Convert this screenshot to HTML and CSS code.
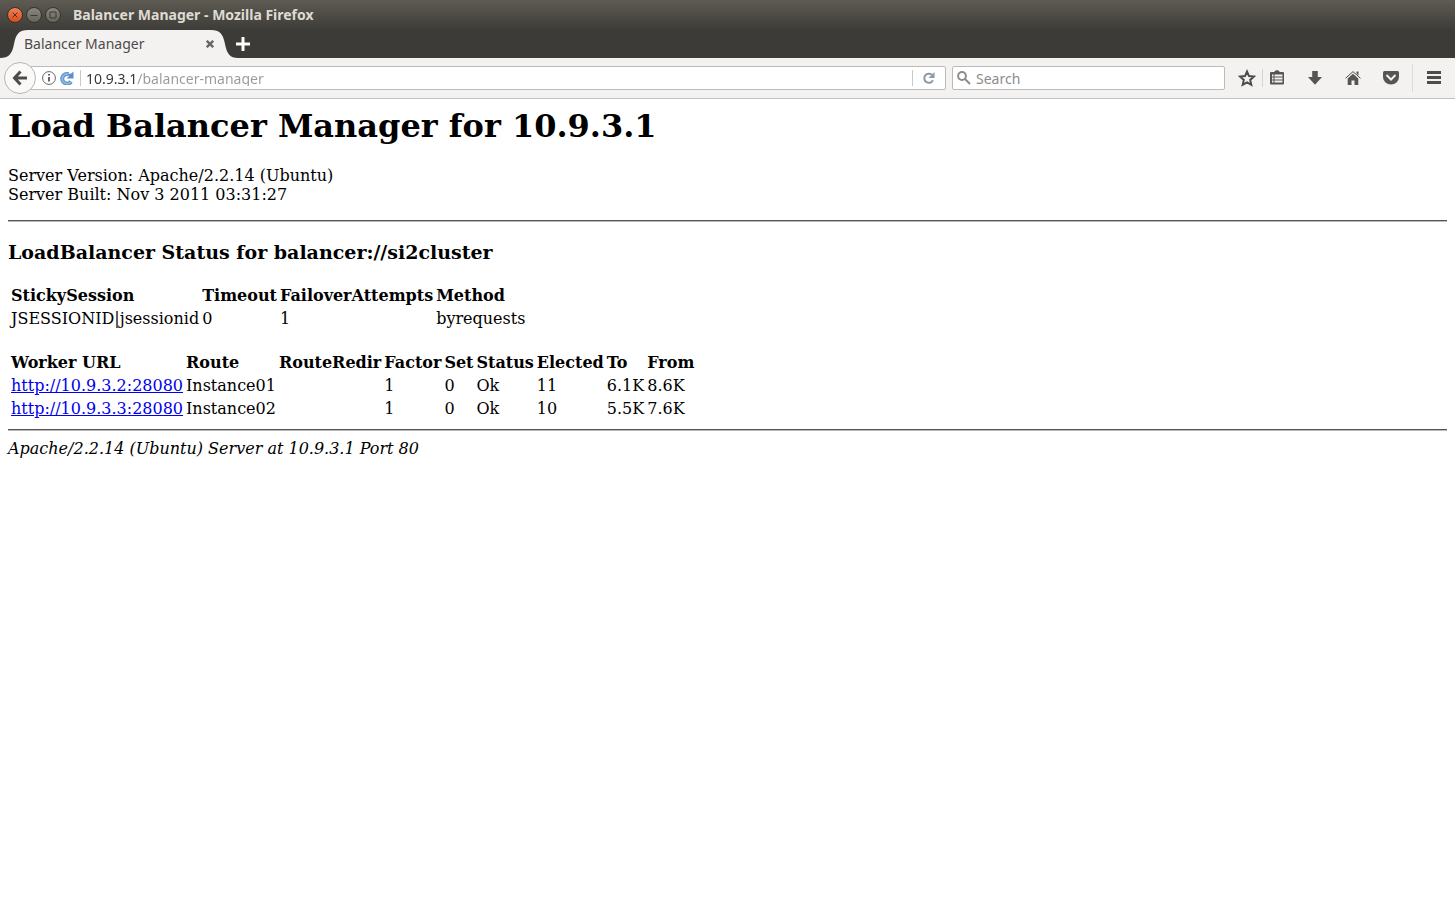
FILE: index.html
```html
<!DOCTYPE html>
<html lang="en">
<head>
<meta charset="utf-8">
<title>Balancer Manager</title>
<link rel="stylesheet" href="styles.css">
</head>
<body>
<header class="browser">
  <div class="titlebar">
    <div class="window-buttons">
      <button class="window-button window-close" type="button" aria-label="Close window"><svg viewBox="0 0 16 16"><path d="M5.500 5.500l5 5M10.500 5.500l-5 5"/></svg></button>
      <button class="window-button" type="button" aria-label="Minimize"><svg viewBox="0 0 16 16"><path d="M4.500 8.500h7"/></svg></button>
      <button class="window-button" type="button" aria-label="Maximize"><svg viewBox="0 0 16 16"><path d="M5 5h6v6H5z"/></svg></button>
    </div>
    <span class="window-title">Balancer Manager - Mozilla Firefox</span>
  </div>
  <div class="tabstrip">
    <div class="tab">
      <svg class="tab-shape" viewBox="0 0 238 28" aria-hidden="true"><path d="M0 28C9 28 12 24 14 14C16 4 19 0 28 0H211C220 0 223 4 225 14C227 24 230 28 238 28Z"/></svg>
      <span class="tab-label">Balancer Manager</span>
      <button class="tab-close" type="button" aria-label="Close tab"><svg viewBox="0 0 10 10"><path d="M1 1l8 8M9 1L1 9"/></svg></button>
    </div>
    <button class="new-tab" type="button" aria-label="New tab"><svg viewBox="0 0 14 14"><path d="M7 0v14M0 7h14"/></svg></button>
  </div>
  <div class="toolbar">
    <button class="back" type="button" aria-label="Back"><svg viewBox="0 0 16 16"><path d="M8.500 1.500L2.500 8l6 6.500M3 8h12"/></svg></button>
    <div class="urlbar">
      <svg class="icon-info" viewBox="0 0 14 14" aria-hidden="true"><circle cx="7" cy="7" r="6.400"/><path class="stem" d="M7 6v4.500M7 3v1.600"/></svg>
      <svg class="icon-site" viewBox="0 0 14 14" aria-hidden="true"><path class="arc-edge" d="M11 10.500A4.800 4.800 0 1 1 8.500 3.200"/><path class="arc-core" d="M11 10.500A4.800 4.800 0 1 1 8.500 3.200"/><path class="arc-head" d="M13.500 .5V7.500H6.500L8.800 5.200 7.500 3 11.300 2.600z"/></svg>
      <input class="url" type="text" aria-label="Address" value="10.9.3.1/balancer-manager">
      <button class="reload" type="button" aria-label="Reload"><svg viewBox="0 0 14 14"><path class="arc" d="M11 9.300A4.600 4.600 0 1 1 9.800 3.700"/><path class="head" d="M12.500 1v6H6.500z"/></svg></button>
    </div>
    <div class="searchbar">
      <svg class="icon-search" viewBox="0 0 14 14" aria-hidden="true"><circle cx="5" cy="5" r="3.900"/><path d="M8 8l5 5"/></svg>
      <input class="search" type="text" aria-label="Search" placeholder="Search">
    </div>
    <nav class="tools">
      <button class="tool" type="button" aria-label="Bookmark this page"><svg viewBox="0 0 18 18"><path class="line" d="M9 2.500l2 4.600 4.900.5-3.700 3.300 1.100 4.900L9 13.300l-4.300 2.500 1.100-4.900L2.100 7.600l4.900-.5z"/></svg></button>
      <button class="tool tool-list" type="button" aria-label="Show bookmarks"><svg viewBox="0 0 18 18"><path fill-rule="evenodd" d="M6 3l2-1.800h2L12 3h3q1 0 1 1v10.500q0 1-1 1H3q-1 0-1-1V4q0-1 1-1zM4 5.500V7.500h1.500V5.500zM6.500 5.500V7.500h8V5.500zM4 8.500v2h1.500v-2zM6.500 8.500v2h8v-2zM4 11.500v2h1.500v-2zM6.500 11.500v2h8v-2z"/></svg></button>
      <button class="tool" type="button" aria-label="Downloads"><svg viewBox="0 0 18 18"><path d="M6.200 2h5.600v6H16l-7 7.800L2 8h4.200z"/></svg></button>
      <button class="tool" type="button" aria-label="Home"><svg viewBox="0 0 18 18"><path class="line roof" d="M1.500 9.300L9 2.600l7.500 6.700"/><path d="M12.500 2.500h2v4l-2-2zM9 4.800l5.300 4.700V16h-3.800v-4.500h-3V16H3.700V9.500z"/></svg></button>
      <button class="tool" type="button" aria-label="Save to Pocket"><svg viewBox="0 0 18 18"><path d="M2.500 2h13q1.500 0 1.500 1.500V8a8 7.500 0 0 1-16 0V3.500Q1 2 2.500 2z"/><path class="check" d="M4.500 6l4.500 4.500L13.500 6"/></svg></button>
      <button class="tool tool-menu" type="button" aria-label="Open menu"><svg viewBox="0 0 18 18"><path class="line bars" d="M2 3.500h14M2 8.500h14M2 13.500h14"/></svg></button>
    </nav>
  </div>
</header>
<main class="page">
  <h1>Load Balancer Manager for 10.9.3.1</h1>
  <p class="server">Server Version: Apache/2.2.14 (Ubuntu)<br>Server Built: Nov 3 2011 03:31:27</p>
  <hr>
  <h3>LoadBalancer Status for balancer://si2cluster</h3>
  <table class="balancer">
    <tr><th>StickySession</th><th>Timeout</th><th>FailoverAttempts</th><th>Method</th></tr>
    <tr><td>JSESSIONID|jsessionid</td><td>0</td><td>1</td><td>byrequests</td></tr>
  </table>
  <table class="workers">
    <tr><th>Worker URL</th><th>Route</th><th>RouteRedir</th><th>Factor</th><th>Set</th><th>Status</th><th>Elected</th><th>To</th><th>From</th></tr>
    <tr><td><a href="#worker1">http://10.9.3.2:28080</a></td><td>Instance01</td><td></td><td>1</td><td>0</td><td>Ok</td><td>11</td><td>6.1K</td><td>8.6K</td></tr>
    <tr><td><a href="#worker2">http://10.9.3.3:28080</a></td><td>Instance02</td><td></td><td>1</td><td>0</td><td>Ok</td><td>10</td><td>5.5K</td><td>7.6K</td></tr>
  </table>
  <hr>
  <address>Apache/2.2.14 (Ubuntu) Server at 10.9.3.1 Port 80</address>
</main>
</body>
</html>
```
FILE: styles.css
```css
* { box-sizing: border-box; }
body { margin: 0; background: #fff; color: #000; }
button { padding: 0; border: 0; background: none; display: flex; align-items: center; justify-content: center; }
svg { display: block; fill: none; flex: none; }
input { border: 0; padding: 0; background: none; min-width: 0; outline: 0; }

.browser, .browser input { font-family: "Noto Sans", "Open Sans", sans-serif; font-size: 14px; }

.titlebar { display: flex; align-items: center; height: 30px; padding: 0 7px; gap: 12px; background: linear-gradient(#5e5b53, #3d3c38); }
.window-buttons { display: flex; gap: 3px; }
.window-button { width: 16px; height: 16px; border-radius: 8px; border: 1px solid #34332f; background: linear-gradient(#8a877f, #67645d); }
.window-close { background: linear-gradient(#f58056, #df4b19); }
.window-button svg { width: 16px; height: 16px; stroke: #3b3a36; stroke-width: 1; }
.window-title { font-weight: bold; color: #dfdbd2; line-height: 20px; }

.tabstrip { display: flex; height: 28px; background: #3c3b37; }
.tab { position: relative; display: flex; align-items: center; justify-content: space-between; width: 238px; padding: 0 22px 0 24px; color: #4c4c4c; }
.tab-shape { position: absolute; left: 0; top: 0; width: 238px; height: 28px; fill: #f4f2f1; }
.tab-label { position: relative; line-height: 20px; }
.tab-close { position: relative; width: 12px; height: 20px; }
.tab-close svg { width: 8px; height: 8px; stroke: #666; stroke-width: 3; }
.new-tab { width: 14px; margin-left: -2px; }
.new-tab svg { width: 14px; height: 14px; stroke: #fff; stroke-width: 3; }

.toolbar { display: flex; align-items: center; height: 41px; padding: 0 12px 0 4px; background: #f4f2f1; border-bottom: 1px solid #c4c2c0; }
.back { position: relative; width: 32px; height: 32px; border: 1px solid #b8b6b4; border-radius: 16px; background: #faf9f8; }
.back svg { width: 16px; height: 16px; stroke: #4c4c4c; stroke-width: 3; }
.urlbar { display: flex; align-items: center; flex: 1; height: 24px; margin-left: -6px; padding-left: 11px; border: 1px solid #bdbbb9; border-radius: 0 2px 2px 0; background: #fff; }
.icon-info { width: 14px; height: 14px; stroke: #666; stroke-width: 1; }
.icon-info .stem { stroke-width: 2; }
.icon-site { width: 14px; height: 14px; margin: 0 6px 0 4px; }
.arc-edge { stroke: #5a8fcc; stroke-width: 4; }
.arc-core { stroke: #8fb6e2; stroke-width: 2; }
.arc-head { fill: #5a8fcc; }
.url { flex: 1; height: 16px; padding-left: 5px; color: #999; }
.browser .url { -webkit-text-fill-color: transparent; background: linear-gradient(90deg, #333 56px, #999 56px) text; border-left: 1px solid #c9c9c9; }
.reload { width: 33px; height: 16px; border-left: 1px solid #c9c9c9; }
.reload svg { width: 14px; height: 14px; }
.reload .arc { stroke: #8b98a5; stroke-width: 2; }
.reload .head { fill: #8b98a5; }
.searchbar { display: flex; align-items: center; gap: 5px; width: 273px; height: 24px; margin-left: 6px; padding-left: 4px; border: 1px solid #bdbbb9; border-radius: 2px; background: #fff; }
.icon-search { width: 14px; height: 14px; stroke: #8c8c8c; stroke-width: 2; }
.search { flex: 1; }
.search::placeholder { color: #8c8c8c; opacity: 1; }
.tools { display: flex; align-items: center; margin-left: 13px; gap: 20px; }
.tool { width: 18px; height: 18px; }
.tool svg { width: 18px; height: 18px; fill: #555; }
.tool .line { fill: none; stroke: #4c4c4c; stroke-width: 2; }
.tool .roof { stroke-width: 1; }
.tool .bars { stroke-width: 3; }
.tool .check { fill: none; stroke: #f4f2f1; stroke-width: 2; }
.tool-list { width: 24px; margin-left: -14px; padding-left: 5px; border-left: 1px solid #d5d3d1; }
.tool-menu { width: 31px; height: 28px; margin-left: -8px; padding-left: 12px; border-left: 1px solid #dddbd9; }

.page { padding: 8px; font-family: "DejaVu Serif", serif; font-size: 16px; line-height: 19px; }
.page h1 { margin: 0 0 21px; font-size: 32px; line-height: 38px; }
.server { margin: 0 0 16px; }
.page hr { height: 2px; margin: 0; border: 0; border-top: 1px solid #555; border-bottom: 1px solid #b8b8b8; }
.page h3 { margin: 19px 0; font-size: 19px; line-height: 23px; }
.page table { border-spacing: 2px; }
.page th, .page td { padding: 1px 0 1px 1px; text-align: left; white-space: nowrap; }
.page td { height: 21px; }
.balancer { margin-bottom: 19px; }
.workers { margin-bottom: 8px; }
.page a { color: #00e; }
.page address { margin-top: 8px; }
```
